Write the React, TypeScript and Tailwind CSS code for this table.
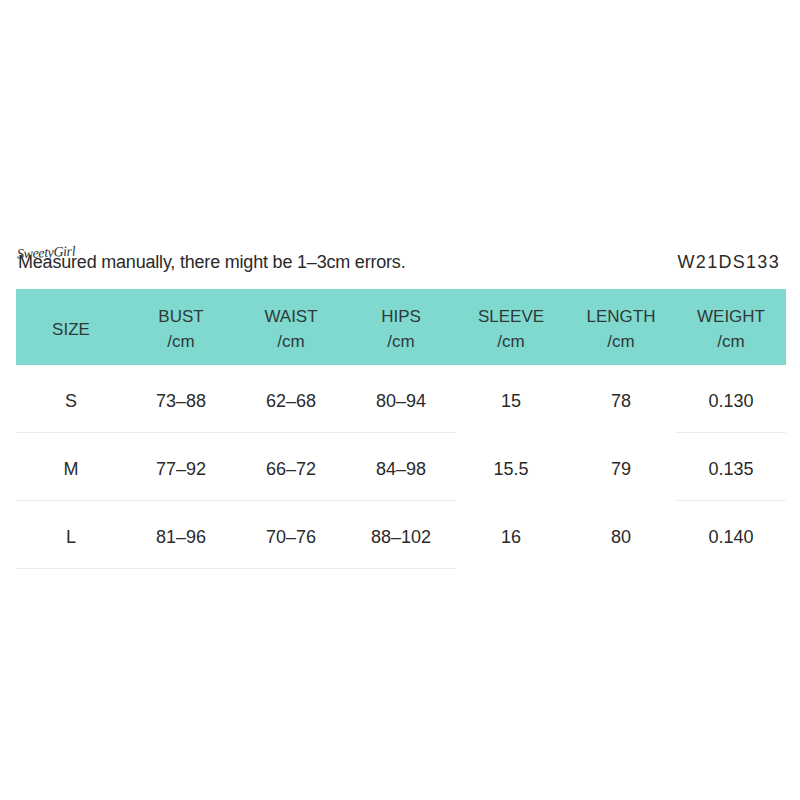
import React from "react";

const HEADERS = [
  { label: "SIZE", unit: false },
  { label: "BUST", unit: true },
  { label: "WAIST", unit: true },
  { label: "HIPS", unit: true },
  { label: "SLEEVE", unit: true },
  { label: "LENGTH", unit: true },
  { label: "WEIGHT", unit: true },
];

const ROWS = [
  ["S", "73–88", "62–68", "80–94", "15", "78", "0.130"],
  ["M", "77–92", "66–72", "84–98", "15.5", "79", "0.135"],
  ["L", "81–96", "70–76", "88–102", "16", "80", "0.140"],
];

// which cells get a bottom rule (the source image has gaps)
function hasLine(row: number, col: number) {
  if (col <= 3) return true;
  if (col === 6) return row < 2;
  return false;
}

export default function App() {
  return (
    <div className="w-[800px] h-[800px] bg-white text-[#222] font-['Liberation_Sans',Arial,sans-serif]">
      <div className="pt-[249px] px-4">
        {/* Caption */}
        <div className="relative flex items-center justify-between h-[24px] pl-[2px] pr-[4px]">
          <span className="text-[18px] leading-none text-[#2a2a2a] tracking-[-0.2px] pt-[2px]">
            Measured manually, there might be 1–3cm errors.
          </span>
          <span className="text-[18px] leading-none text-[#2a2a2a] tracking-[1.3px] pt-[2px]">W21DS133</span>
          <span className="absolute left-[1px] top-[-3px] text-[14px] italic leading-none text-[#333] font-['Liberation_Serif',serif] tracking-[-0.4px] -rotate-3">
            SweetyGirl
          </span>
        </div>

        {/* Table */}
        <div className="mt-[16px] w-[770px]">
          <div className="grid grid-cols-7 h-[76px] bg-[#80d9cf] text-[#2f3a38]">
            {HEADERS.map((h) => (
              <div
                key={h.label}
                className="flex flex-col items-center justify-center pt-[4px] text-[17px] leading-[25px]"
              >
                <span>{h.label}</span>
                {h.unit && <span>/cm</span>}
              </div>
            ))}
          </div>
          {ROWS.map((row, r) => (
            <div key={row[0]} className="grid grid-cols-7">
              {row.map((cell, c) => (
                <div
                  key={c}
                  className={
                    "h-[68px] flex items-center justify-center pt-[5px] text-[18px] text-[#2a2a2a] border-b " +
                    (hasLine(r, c) ? "border-[#ececec]" : "border-transparent")
                  }
                >
                  {cell}
                </div>
              ))}
            </div>
          ))}
        </div>
      </div>
    </div>
  );
}
